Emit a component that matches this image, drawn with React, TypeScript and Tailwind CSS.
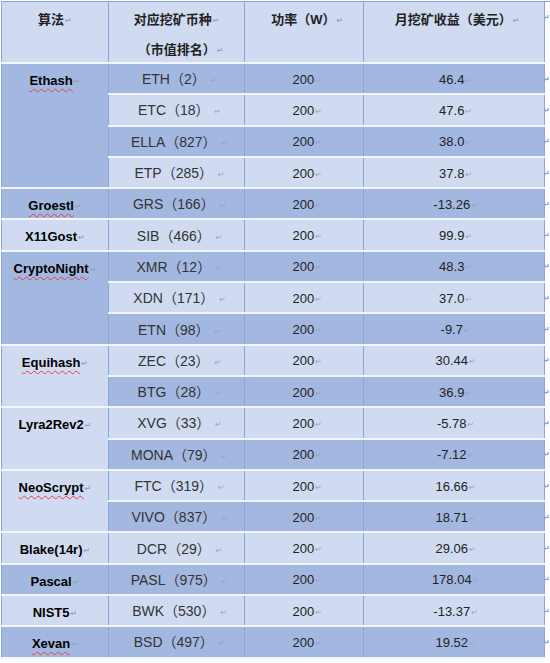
const FONT = '"Liberation Sans", "Noto Sans CJK SC", sans-serif';

type Coin = { name: string; rank: number; power: number; income: string };
type Algo = { algo: string; spell?: boolean; dark: boolean; coins: Coin[] };

const ALGOS: Algo[] = [
  {
    algo: "Ethash",
    spell: true,
    dark: true,
    coins: [
      { name: "ETH", rank: 2, power: 200, income: "46.4" },
      { name: "ETC", rank: 18, power: 200, income: "47.6" },
      { name: "ELLA", rank: 827, power: 200, income: "38.0" },
      { name: "ETP", rank: 285, power: 200, income: "37.8" },
    ],
  },
  { algo: "Groestl", spell: true, dark: true, coins: [{ name: "GRS", rank: 166, power: 200, income: "-13.26" }] },
  { algo: "X11Gost", dark: false, coins: [{ name: "SIB", rank: 466, power: 200, income: "99.9" }] },
  {
    algo: "CryptoNight",
    spell: true,
    dark: true,
    coins: [
      { name: "XMR", rank: 12, power: 200, income: "48.3" },
      { name: "XDN", rank: 171, power: 200, income: "37.0" },
      { name: "ETN", rank: 98, power: 200, income: "-9.7" },
    ],
  },
  {
    algo: "Equihash",
    spell: true,
    dark: false,
    coins: [
      { name: "ZEC", rank: 23, power: 200, income: "30.44" },
      { name: "BTG", rank: 28, power: 200, income: "36.9" },
    ],
  },
  {
    algo: "Lyra2Rev2",
    dark: false,
    coins: [
      { name: "XVG", rank: 33, power: 200, income: "-5.78" },
      { name: "MONA", rank: 79, power: 200, income: "-7.12" },
    ],
  },
  {
    algo: "NeoScrypt",
    spell: true,
    dark: false,
    coins: [
      { name: "FTC", rank: 319, power: 200, income: "16.66" },
      { name: "VIVO", rank: 837, power: 200, income: "18.71" },
    ],
  },
  { algo: "Blake(14r)", dark: false, coins: [{ name: "DCR", rank: 29, power: 200, income: "29.06" }] },
  { algo: "Pascal", dark: true, coins: [{ name: "PASL", rank: 975, power: 200, income: "178.04" }] },
  { algo: "NIST5", dark: false, coins: [{ name: "BWK", rank: 530, power: 200, income: "-13.37" }] },
  { algo: "Xevan", spell: true, dark: true, coins: [{ name: "BSD", rank: 497, power: 200, income: "19.52" }] },
];

const MARK_FONT = { fontFamily: '"DejaVu Sans", sans-serif' };

function Mark() {
  return (
    <span className="ml-[1px] align-[1px] text-[8px] text-[#9aa3b5]" style={MARK_FONT}>
      ↵
    </span>
  );
}

function RowEnd() {
  return (
    <span className="-ml-[2px] text-[8px] text-[#555]" style={MARK_FONT}>
      ↵
    </span>
  );
}

const cellBase =
  "border-x border-x-[#8ca5d8] border-b-2 border-b-[#f2f5fc] p-0 text-center";

export default function App() {
  let rowIndex = 0;
  return (
    <div className="h-[663px] w-[550px] overflow-hidden bg-white pt-px pl-px" style={{ fontFamily: FONT }}>
      <table className="table-fixed border-collapse border-t border-l border-[#8ca5d8] text-[13px] text-[#222]">
        <colgroup>
          <col className="w-[107px]" />
          <col className="w-[137px]" />
          <col className="w-[119px]" />
          <col className="w-[182px]" />
          <col className="w-[4px]" />
        </colgroup>
        <thead>
          <tr className="h-[58px] bg-[#d0dbf1] font-bold">
            <th className={`${cellBase} pt-[4px] align-top leading-[28px]`}>
              算法
              <Mark />
            </th>
            <th className={`${cellBase} pt-[4px] align-top leading-[28px]`}>
              <div>
                对应挖矿币种
                <Mark />
              </div>
              <div className="pl-[8px] pt-[4px] leading-[22px]">
                （市值排名）
                <Mark />
              </div>
            </th>
            <th className={`${cellBase} pt-[4px] align-top leading-[28px]`}>
              <span className="pl-[6px]">功率（W）</span>
              <Mark />
            </th>
            <th className={`${cellBase} pt-[4px] align-top leading-[28px]`}>
              <span className="pl-[6px]">月挖矿收益（美元）</span>
              <Mark />
            </th>
            <th className="w-[4px] overflow-hidden border-0 bg-white p-0 align-top font-normal leading-[28px]">
              <RowEnd />
            </th>
          </tr>
        </thead>
        <tbody>
          {ALGOS.map((group) =>
            group.coins.map((coin, i) => {
              const dark = rowIndex++ % 2 === 0;
              const shade = dark ? "bg-[#a3b8e1]" : "bg-[#d0dbf1]";
              return (
                <tr key={coin.name} className="h-[31.3px]">
                  {i === 0 && (
                    <td
                      rowSpan={group.coins.length}
                      className={`${cellBase} pt-[7px] align-top font-bold leading-[20px] text-black ${
                        group.dark ? "bg-[#a3b8e1]" : "bg-[#d0dbf1]"
                      }`}
                    >
                      <span
                        className={
                          group.spell
                            ? "underline decoration-[#e0413d] decoration-wavy decoration-1 underline-offset-[3px]"
                            : ""
                        }
                      >
                        {group.algo}
                      </span>
                      <Mark />
                    </td>
                  )}
                  <td className={`${cellBase} pt-[3px] align-middle text-[14px] leading-[20px] text-[#333] ${shade}`}>
                    <span className="pl-[6px]">
                      {coin.name}（{coin.rank}）
                    </span>
                    <span className="ml-[4px]">
                      <Mark />
                    </span>
                  </td>
                  <td className={`${cellBase} pt-[3px] align-middle leading-[20px] ${shade}`}>
                    <span className="pl-[6px]">{coin.power}</span>
                    <Mark />
                  </td>
                  <td className={`${cellBase} pt-[3px] align-middle leading-[20px] ${shade}`}>
                    <span className="pl-[3px]">{coin.income}</span>
                    <Mark />
                  </td>
                  <td className="w-[4px] overflow-hidden border-0 bg-white p-0 align-middle leading-[20px]">
                    <RowEnd />
                  </td>
                </tr>
              );
            })
          )}
        </tbody>
      </table>
    </div>
  );
}
